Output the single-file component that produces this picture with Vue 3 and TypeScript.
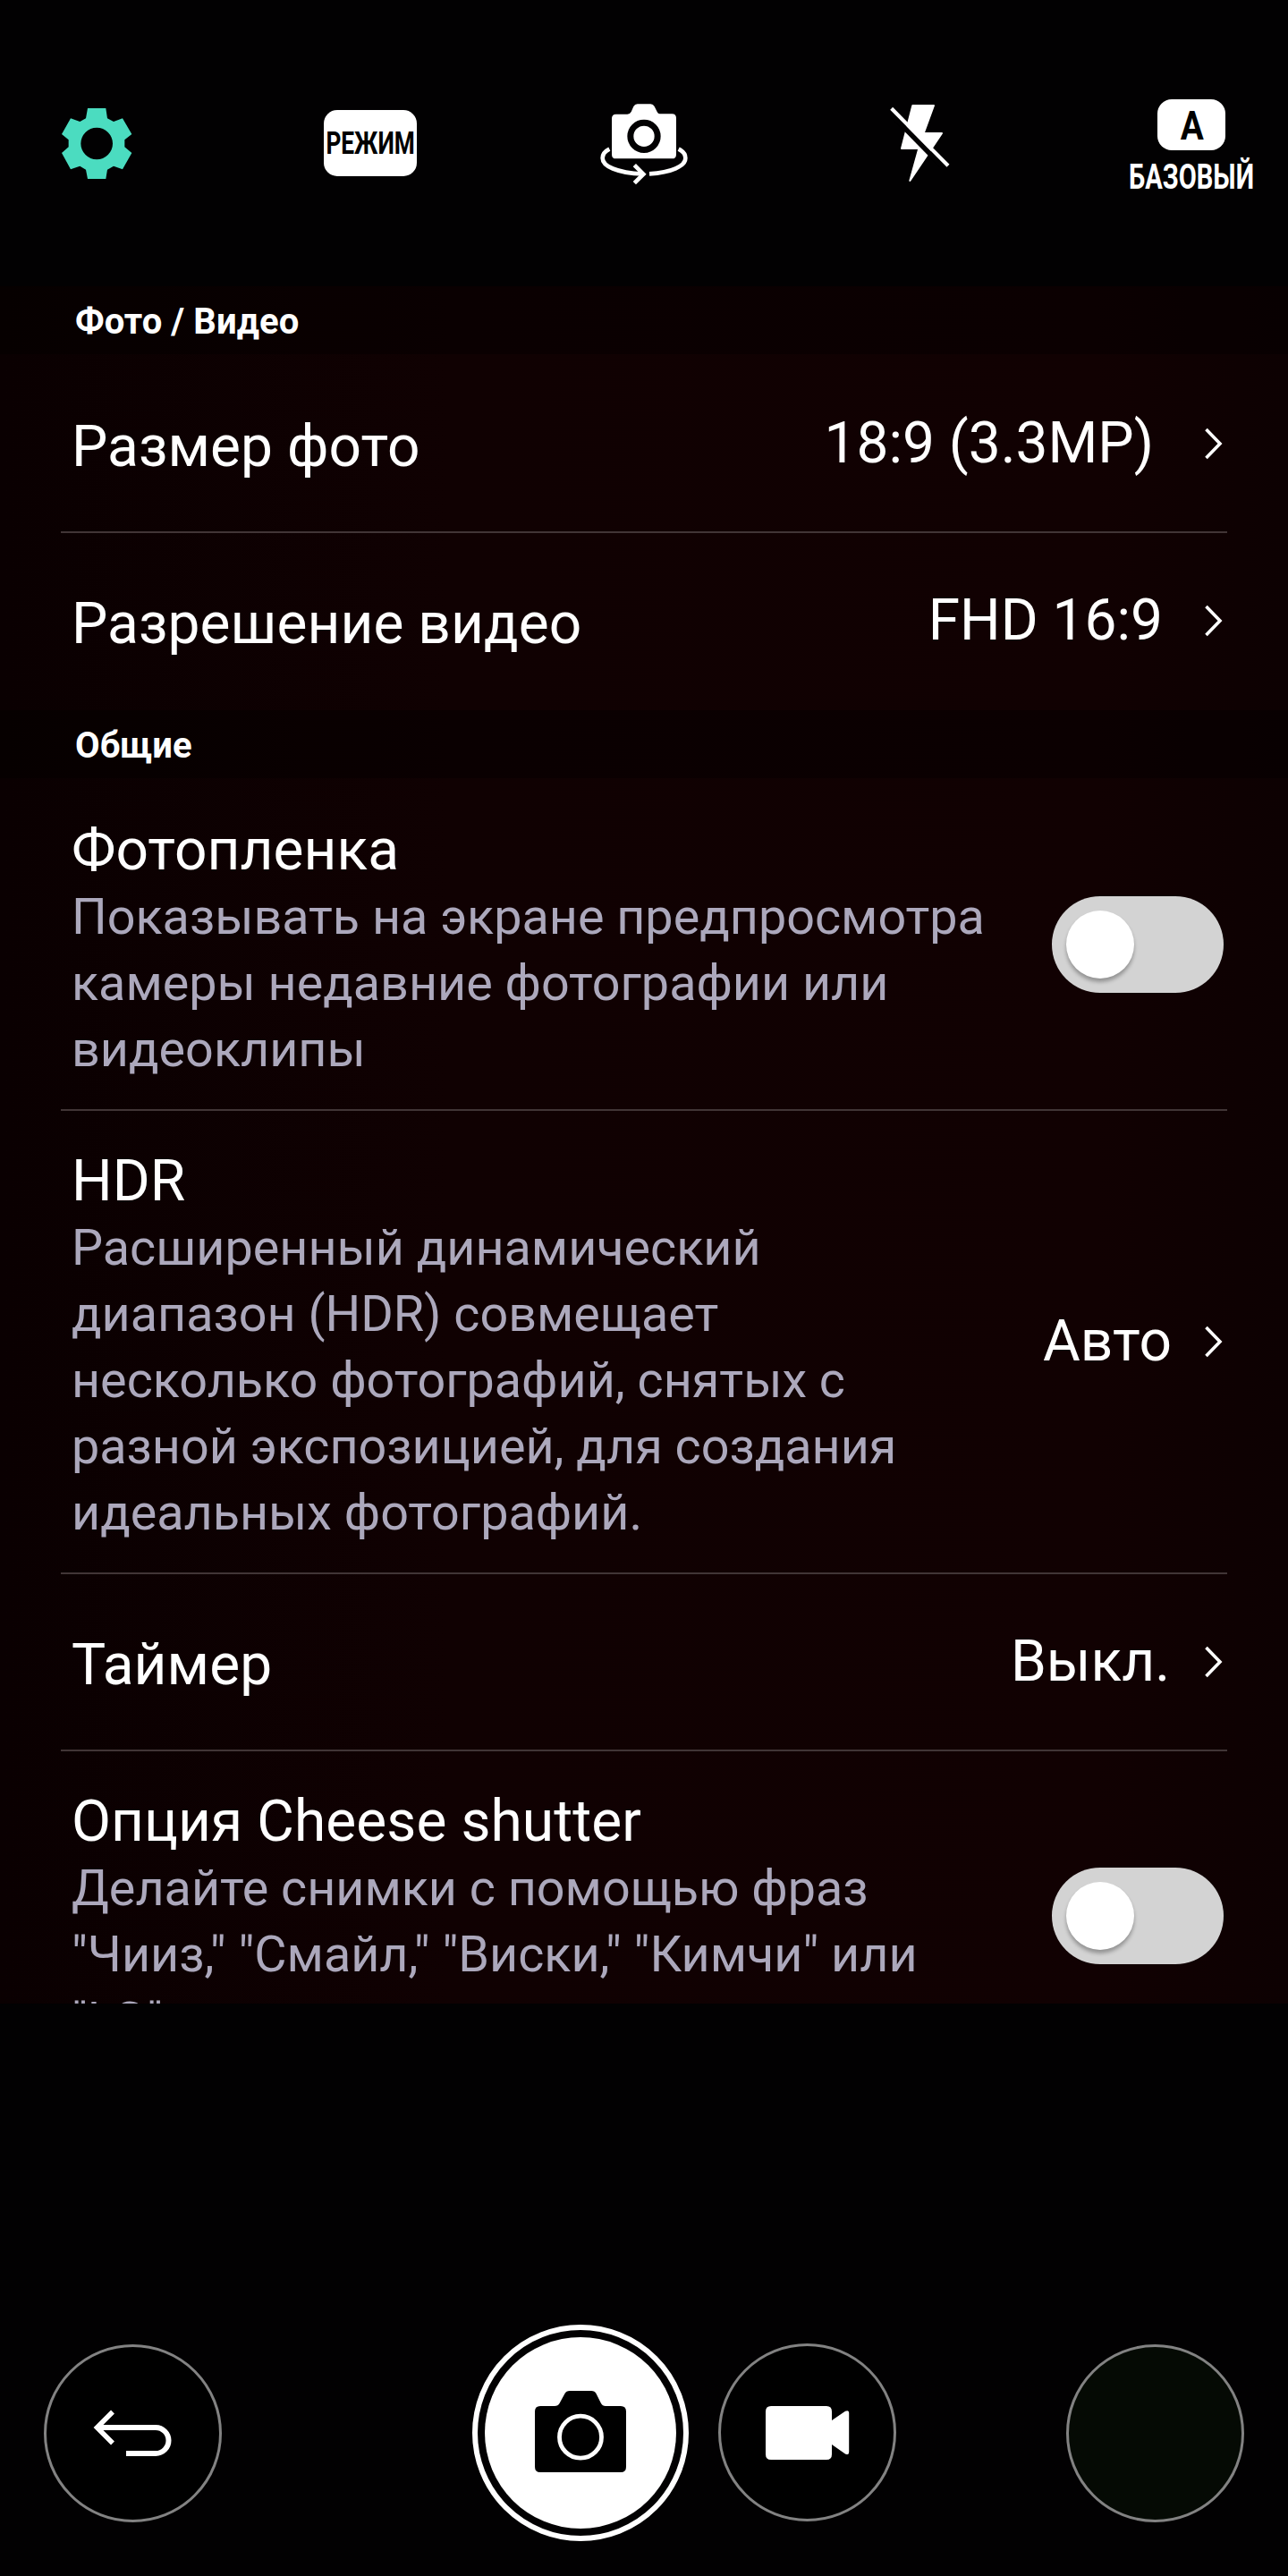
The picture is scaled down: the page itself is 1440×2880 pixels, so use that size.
<script setup lang="ts">
interface SettingRow {
  title: string
  description?: string
  value?: string
  valueGap?: number
  enabled?: boolean
}

interface SettingSection {
  name: string
  rows: SettingRow[]
}

const sections: SettingSection[] = [
  {
    name: 'Фото / Видео',
    rows: [
      { title: 'Размер фото', value: '18:9 (3.3MP)', valueGap: 56 },
      { title: 'Разрешение видео', value: 'FHD 16:9', valueGap: 46 },
    ],
  },
  {
    name: 'Общие',
    rows: [
      {
        title: 'Фотопленка',
        description: 'Показывать на экране предпросмотра\nкамеры недавние фотографии или\nвидеоклипы',
        enabled: false,
      },
      {
        title: 'HDR',
        description:
          'Расширенный динамический\nдиапазон (HDR) совмещает\nнесколько фотографий, снятых с\nразной экспозицией, для создания\nидеальных фотографий.',
        value: 'Авто',
        valueGap: 36,
      },
      { title: 'Таймер', value: 'Выкл.', valueGap: 38 },
      {
        title: 'Опция Cheese shutter',
        description: 'Делайте снимки с помощью фраз\n"Чииз," "Смайл," "Виски," "Кимчи" или\n"LG".',
        enabled: false,
      },
    ],
  },
]
</script>

<template>
  <div class="screen">
    <header class="topbar">
      <div class="tool">
        <svg width="78.33" height="79" viewBox="87 91 235 237">
          <path
            fill="#4bdcc0"
            fill-rule="evenodd"
            d="M174 91H235L240 125L261 136L291 125L322 178L298 197V221L322 241L291 296L261 285L240 297L235 328H174L168 297L148 285L117 296L87 241L110 221V197L87 178L117 125L148 136L168 125ZM204.500 156A53.500 53.500 0 1 0 204.500 263A53.500 53.500 0 1 0 204.500 156Z"
          />
        </svg>
      </div>
      <div class="tool">
        <svg width="104" height="74" viewBox="0 0 104 74">
          <rect width="104" height="74" rx="15" fill="#fff" />
          <text x="2.400" y="49" font-size="35" font-weight="700" textLength="99.400" lengthAdjust="spacingAndGlyphs">РЕЖИМ</text>
        </svg>
      </div>
      <div class="tool">
        <svg class="flip" width="98" height="90" viewBox="93 77 294 270">
          <path
            fill="#fff"
            d="M146 112H184Q193 112 197 104L205 86Q209 78 218 78H262Q271 78 275 86L284 104Q287 111 293 111H334Q348 111 348 125V247Q348 261 334 261H146Q132 261 132 247V126Q132 112 146 112Z"
          />
          <circle cx="240" cy="186" r="45.500" fill="none" stroke="#020102" stroke-width="21" />
          <g fill="none" stroke="#fff" stroke-width="14">
            <path d="M124 229C108 237 101 247 101 259C101 286 148 309 236 312.500" />
            <path d="M356 229C372 237 379 247 379 259C379 286 332 308 258 312" />
            <path d="M208 283L238 313L208 343" />
          </g>
        </svg>
      </div>
      <div class="tool">
        <svg class="flash" width="66" height="88" viewBox="1064 78 198 264">
          <path
            fill="#fff"
            stroke="#fff"
            stroke-width="6"
            stroke-linejoin="round"
            d="M1140 84H1211L1177 177H1238L1131 336L1161 228H1103Z"
          />
          <path stroke="#020102" stroke-width="17" d="M1071 116L1236 284" />
          <path stroke="#fff" stroke-width="12.500" d="M1069 94L1259 286" />
        </svg>
      </div>
      <div class="tool">
        <svg class="basic" width="160" height="122" viewBox="-10 -8 160 122">
          <rect x="32" y="3" width="76" height="57" rx="16" fill="#fff" />
          <text x="57.800" y="47.700" font-size="44" font-weight="700" textLength="26" lengthAdjust="spacingAndGlyphs">A</text>
          <text x="0" y="102.700" font-size="39.500" font-weight="700" fill="#fff" textLength="140" lengthAdjust="spacingAndGlyphs">БАЗОВЫЙ</text>
        </svg>
      </div>
    </header>

    <main class="settings">
      <section v-for="section in sections" :key="section.name">
        <h2 class="section-name">{{ section.name }}</h2>
        <div class="rows">
          <div v-for="row in section.rows" :key="row.title" class="row">
            <div class="label" :class="{ single: !row.description }">
              <div class="title">{{ row.title }}</div>
              <div v-if="row.description" class="description">{{ row.description }}</div>
            </div>
            <div v-if="row.value" class="choice">
              <span class="value" :style="{ marginRight: row.valueGap + 'px' }">{{ row.value }}</span>
              <svg width="24" height="36" viewBox="0 0 24 36">
                <path d="M2.500 2L18 18L2.500 34" fill="none" stroke="#fff" stroke-width="3.600" />
              </svg>
            </div>
            <div v-else class="switch" :class="{ on: row.enabled }"><div class="knob"></div></div>
          </div>
        </div>
      </section>
    </main>

    <footer class="controls">
      <div class="round back">
        <svg width="90" height="54" viewBox="103 2694 90 54" fill="none" stroke="#fff">
          <path stroke-width="6" d="M108 2714H173A14.500 14.500 0 0 1 173 2743H140" />
          <path stroke-width="5.500" d="M125 2696.500L107.500 2714L125 2731.500" />
        </svg>
      </div>
      <div class="shutter">
        <div class="disc">
          <svg width="102" height="91" viewBox="0 0 102 91">
            <path
              d="M6 17H22Q26 17 27.500 14L33.500 3Q35 0 39 0H63Q67 0 68.500 3L74 14Q75.500 17 79 17H96Q102 17 102 23V85Q102 91 96 91H6Q0 91 0 85V23Q0 17 6 17Z"
            />
            <circle cx="51" cy="51.700" r="23.500" fill="none" stroke="#fff" stroke-width="4.800" />
          </svg>
        </div>
      </div>
      <div class="round video">
        <svg width="94" height="60" viewBox="0 0 94 60">
          <path
            fill="#fff"
            d="M6 0H68Q74 0 74 6V16L89 5.800Q93.200 4 93.200 8V51Q93.200 55.500 89 53.500L74 43V54Q74 60 68 60H6Q0 60 0 54V6Q0 0 6 0Z"
          />
        </svg>
      </div>
      <div class="round gallery"></div>
    </footer>
  </div>
</template>

<style>
body {
  margin: 0;
  background: #020102;
}
</style>

<style scoped>
.screen {
  display: flex;
  flex-direction: column;
  width: 1440px;
  height: 2880px;
  overflow: hidden;
  background: #020102;
  color: #fff;
  font-family: Roboto, "Noto Sans", sans-serif;
}
svg {
  display: block;
  overflow: visible;
}
.topbar {
  display: flex;
  flex: none;
  align-items: center;
  width: 1530px;
  height: 320px;
  margin-left: -45px;
}
.tool {
  display: flex;
  justify-content: center;
  width: 306px;
}
.flip {
  margin-top: 2px;
}
.flash {
  margin-left: 3px;
}
.basic {
  margin-top: 2px;
}
.settings {
  flex: none;
  height: 1920px;
  overflow: hidden;
  background: linear-gradient(90deg, #0a0001, #100102 35%, #110102 85%, #0d0102);
}
.section-name {
  box-sizing: border-box;
  height: 76px;
  margin: 0;
  padding: 2px 0 0 84px;
  background: rgba(0, 0, 0, 0.35);
  font-size: 40px;
  font-weight: 700;
  line-height: 75px;
  letter-spacing: 0.08px;
}
.rows {
  padding: 2px 68px 0;
}
.row {
  display: flex;
  align-items: center;
  justify-content: space-between;
  padding: 0 4px 0 12px;
  border-bottom: 2px solid #413536;
}
.row:last-child {
  border-color: transparent;
}
.label {
  padding: 41px 0 30px;
}
.label.single {
  padding: 64px 0 57px;
}
.title {
  font-size: 64px;
  line-height: 75px;
  letter-spacing: 0.07px;
  white-space: nowrap;
}
.description {
  color: #aca8bc;
  font-size: 55.7px;
  line-height: 74px;
  white-space: pre;
}
.choice {
  display: flex;
  align-items: center;
  margin-right: -2px;
}
.value {
  font-size: 64px;
  line-height: 74px;
  white-space: nowrap;
}
.switch {
  box-sizing: border-box;
  width: 192px;
  height: 108px;
  padding: 16px;
  border-radius: 54px;
  background: #d3d3d3;
}
.knob {
  width: 76px;
  height: 76px;
  border-radius: 50%;
  background: #fff;
  box-shadow: 0 4px 4px rgba(0, 0, 0, 0.3);
}
.switch.on .knob {
  margin-left: auto;
}
.controls {
  display: flex;
  align-items: center;
  height: 242px;
  padding: 359px 49px 39px;
}
.round {
  display: flex;
  align-items: center;
  justify-content: center;
  box-sizing: border-box;
  width: 199px;
  height: 199px;
  border: 3px solid #828282;
  border-radius: 50%;
  background: #000;
}
.back {
  margin-top: 1px;
}
.shutter {
  box-sizing: border-box;
  width: 242px;
  height: 242px;
  margin-left: 280px;
  padding: 8px;
  border: 6px solid #fff;
  border-radius: 50%;
}
.disc {
  display: flex;
  justify-content: center;
  box-sizing: border-box;
  height: 214px;
  padding-top: 60px;
  border-radius: 50%;
  background: #fff;
}
.video {
  margin: -1px 0 0 33px;
}
.video svg {
  margin-top: 1px;
}
.gallery {
  margin: 1px 0 0 190px;
  background: #050a04;
}
</style>
